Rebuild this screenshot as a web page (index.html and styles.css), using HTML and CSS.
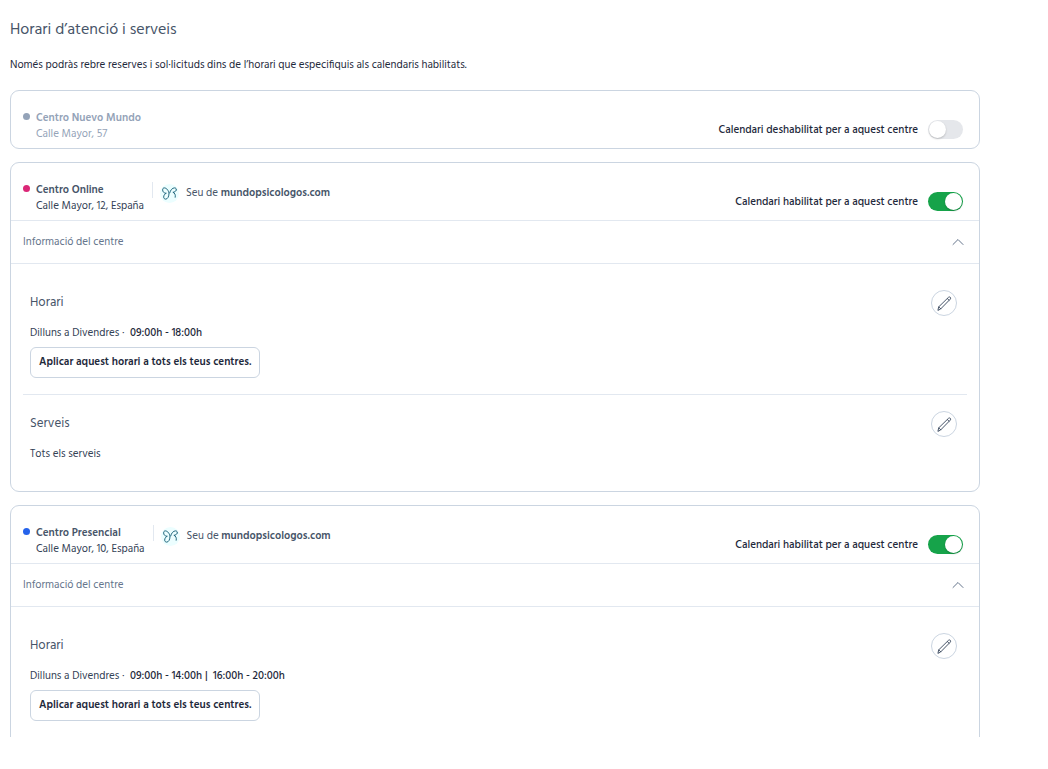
FILE: index.html
```html
<!DOCTYPE html>
<html lang="ca">
<head>
<meta charset="UTF-8">
<meta name="viewport" content="width=device-width, initial-scale=1.0">
<title>Horari d’atenció i serveis</title>
<link rel="stylesheet" href="styles.css">

<script>
    function togglePanel(button) {
        var panel = document.getElementById(button.getAttribute('aria-controls'));
        panel.hidden = !panel.hidden;
        button.setAttribute('aria-expanded', String(!panel.hidden));
    }
</script>
</head>
<body>
<svg width="0" height="0" class="sprite" aria-hidden="true">
    <symbol id="icon-pencil" viewBox="0 0 16 16">
        <path d="M2 15l.7-3.100L12.500 2.300c.5-.5 1.300-.5 1.800 0s.5 1.300 0 1.800L4.800 13.800zM2.700 11.900l2.100 1.900M11.300 3.500l1.800 1.800"/>
    </symbol>
    <symbol id="icon-chevron" viewBox="0 0 12 8">
        <path d="M1 6.500l5-5 5 5"/>
    </symbol>
    <symbol id="icon-butterfly" viewBox="0 0 16 16">
        <path d="M4.200 7.800C2 7.600.7 6.200.7 4.200.7 2.800 1.300 2 2.400 2c2.600 0 5 3.200 5 6.400 0 3-1.600 5.600-3.400 5.600-1.400 0-2.200-.9-2.200-2.200 0-1.900 1-3.200 2.400-4"/>
        <path d="M8.200 7.400C8.900 4.400 11 2 13.400 2c1.400 0 2 .9 1.800 2.200M15.200 4.200c-.4 1.600-1.600 2.400-3.600 2.500 2 .7 3.100 2.700 2.500 5.300"/>
    </symbol>
</svg>

<main class="page">
    <h1 class="page-title">Horari d’atenció i serveis</h1>
    <p class="page-intro">Només podràs rebre reserves i sol·licituds dins de l’horari que especifiquis als calendaris habilitats.</p>

    <section class="card disabled">
        <div class="card-header">
            <span class="dot"></span>
            <div class="center">
                <h2 class="center-name">Centro Nuevo Mundo</h2>
                <p class="center-address">Calle Mayor, 57</p>
            </div>
            <label class="switch">Calendari deshabilitat per a aquest centre <input type="checkbox"></label>
        </div>
    </section>

    <section class="card">
        <div class="card-header">
            <span class="dot pink"></span>
            <div class="center">
                <h2 class="center-name">Centro Online</h2>
                <p class="center-address">Calle Mayor, 12, España</p>
            </div>
            <div class="site">
                <span class="site-logo"><svg><use href="#icon-butterfly"/></svg></span>
                <span>Seu de <b>mundopsicologos.com</b></span>
            </div>
            <label class="switch">Calendari habilitat per a aquest centre <input type="checkbox" checked></label>
        </div>
        <button type="button" class="info-toggle" aria-expanded="true" aria-controls="online" onclick="togglePanel(this)">
            Informació del centre
            <svg class="chevron"><use href="#icon-chevron"/></svg>
        </button>
        <div class="panel" id="online">
            <div class="block">
                <div class="block-header">
                    <h3 class="block-title">Horari</h3>
                    <button type="button" class="edit-button" aria-label="Editar horari"><svg><use href="#icon-pencil"/></svg></button>
                </div>
                <p class="block-text">Dilluns a Divendres ·&nbsp; <span class="hours">09:00h - 18:00h</span></p>
                <button type="button" class="apply-button">Aplicar aquest horari a tots els teus centres.</button>
            </div>
            <div class="block">
                <div class="block-header">
                    <h3 class="block-title">Serveis</h3>
                    <button type="button" class="edit-button" aria-label="Editar serveis"><svg><use href="#icon-pencil"/></svg></button>
                </div>
                <p class="block-text">Tots els serveis</p>
            </div>
        </div>
    </section>

    <section class="card">
        <div class="card-header">
            <span class="dot blue"></span>
            <div class="center">
                <h2 class="center-name">Centro Presencial</h2>
                <p class="center-address">Calle Mayor, 10, España</p>
            </div>
            <div class="site">
                <span class="site-logo"><svg><use href="#icon-butterfly"/></svg></span>
                <span>Seu de <b>mundopsicologos.com</b></span>
            </div>
            <label class="switch">Calendari habilitat per a aquest centre <input type="checkbox" checked></label>
        </div>
        <button type="button" class="info-toggle" aria-expanded="true" aria-controls="presencial" onclick="togglePanel(this)">
            Informació del centre
            <svg class="chevron"><use href="#icon-chevron"/></svg>
        </button>
        <div class="panel" id="presencial">
            <div class="block">
                <div class="block-header">
                    <h3 class="block-title">Horari</h3>
                    <button type="button" class="edit-button" aria-label="Editar horari"><svg><use href="#icon-pencil"/></svg></button>
                </div>
                <p class="block-text">Dilluns a Divendres ·&nbsp; <span class="hours">09:00h - 14:00h |&nbsp; 16:00h - 20:00h</span></p>
                <button type="button" class="apply-button">Aplicar aquest horari a tots els teus centres.</button>
            </div>
        </div>
    </section>
</main>
</body>
</html>
```
FILE: styles.css
```css
* {
    box-sizing: border-box;
}

body {
    margin: 0;
    background-color: #fff;
    color: #1e293b;
    font-family: Hind, "Noto Sans", sans-serif;
    font-size: 11px;
    line-height: 16px;
}

h1, h2, h3, p {
    margin: 0;
}

button {
    font: inherit;
    color: inherit;
    background: none;
    border: none;
    cursor: pointer;
}

svg {
    fill: none;
    stroke: currentColor;
    stroke-linecap: round;
    stroke-linejoin: round;
}

.sprite {
    position: absolute;
}

/* the list scrolls inside the window */
.page {
    height: calc(100vh - 32px);
    padding: 18px 68px 0 10px;
    overflow-y: auto;
    scrollbar-width: none;
}

.page-title {
    margin-bottom: 15px;
    color: #475569;
    font-size: 16px;
    font-weight: 400;
    line-height: 24px;
}

.page-intro {
    margin-bottom: 17px;
}

.card {
    margin-bottom: 13px;
    border: 1px solid #cbd5e1;
    border-radius: 9px;
}

.card-header {
    display: flex;
    align-items: flex-start;
    padding: 19px 16px 6px 12px;
}

.dot {
    width: 7px;
    height: 7px;
    margin: 3px 6px 0 0;
    border-radius: 50%;
    background-color: #94a3b8;
}

.dot.pink {
    background-color: #db2777;
}

.dot.blue {
    background-color: #2563eb;
}

.center-name {
    color: #475569;
    font-size: 11px;
    font-weight: 600;
    line-height: 16px;
}

.center-address {
    color: #334155;
}

.disabled .center-name,
.disabled .center-address {
    color: #94a3b8;
}

.site {
    display: flex;
    align-items: center;
    gap: 7px;
    height: 22px;
    margin-left: 8px;
    color: #475569;
}

.site::before {
    content: "";
    align-self: flex-start;
    height: 16px;
    border-left: 1px solid #e2e8f0;
}

.site b {
    font-weight: 600;
}

.site-logo {
    display: flex;
    align-items: center;
    justify-content: center;
    width: 19px;
    height: 19px;
    border-radius: 50%;
    background-color: #ecfeff;
    color: #155e75;
}

.site-logo svg {
    width: 15px;
    height: 15px;
}

.switch {
    display: flex;
    align-items: center;
    align-self: flex-end;
    gap: 10px;
    margin: 0 0 3px auto;
    font-weight: 500;
    cursor: pointer;
}

.switch input {
    display: flex;
    appearance: none;
    width: 35px;
    height: 19px;
    margin: 0;
    padding: 1px;
    border-radius: 10px;
    background-color: #e5e7eb;
    cursor: pointer;
}

.switch input::before {
    content: "";
    width: 17px;
    height: 17px;
    border-radius: 50%;
    background-color: #fff;
    box-shadow: 0 1px 2px rgba(0, 0, 0, 0.2);
}

.switch input:checked {
    justify-content: flex-end;
    background-color: #16a34a;
}

.info-toggle {
    display: flex;
    align-items: center;
    justify-content: space-between;
    width: 100%;
    height: 44px;
    padding: 0 15px 0 12px;
    border-top: 1px solid #e2e8f0;
    border-bottom: 1px solid #e2e8f0;
    color: #64748b;
}

.chevron {
    width: 12px;
    height: 8px;
}

.info-toggle[aria-expanded="false"] .chevron {
    transform: rotate(180deg);
}

.panel {
    padding: 10px 12px 13px;
}

.block {
    padding: 16px 10px 16px 7px;
}

.block + .block {
    border-top: 1px solid #e2e8f0;
}

.block-header {
    display: flex;
    align-items: center;
    justify-content: space-between;
    margin-bottom: 9px;
}

.block-title {
    color: #475569;
    font-size: 13px;
    font-weight: 400;
}

.edit-button {
    display: flex;
    align-items: center;
    justify-content: center;
    width: 26px;
    height: 26px;
    padding: 0;
    border: 1px solid #cbd5e1;
    border-radius: 50%;
    color: #475569;
}

.edit-button svg {
    width: 16px;
    height: 16px;
}

.block-text {
    color: #334155;
}

.hours {
    color: #1e293b;
    font-weight: 500;
}

.apply-button {
    height: 31px;
    margin-top: 6px;
    padding: 0 8px 1px;
    border: 1px solid #cbd5e1;
    border-radius: 6px;
    font-weight: 600;
}
```
